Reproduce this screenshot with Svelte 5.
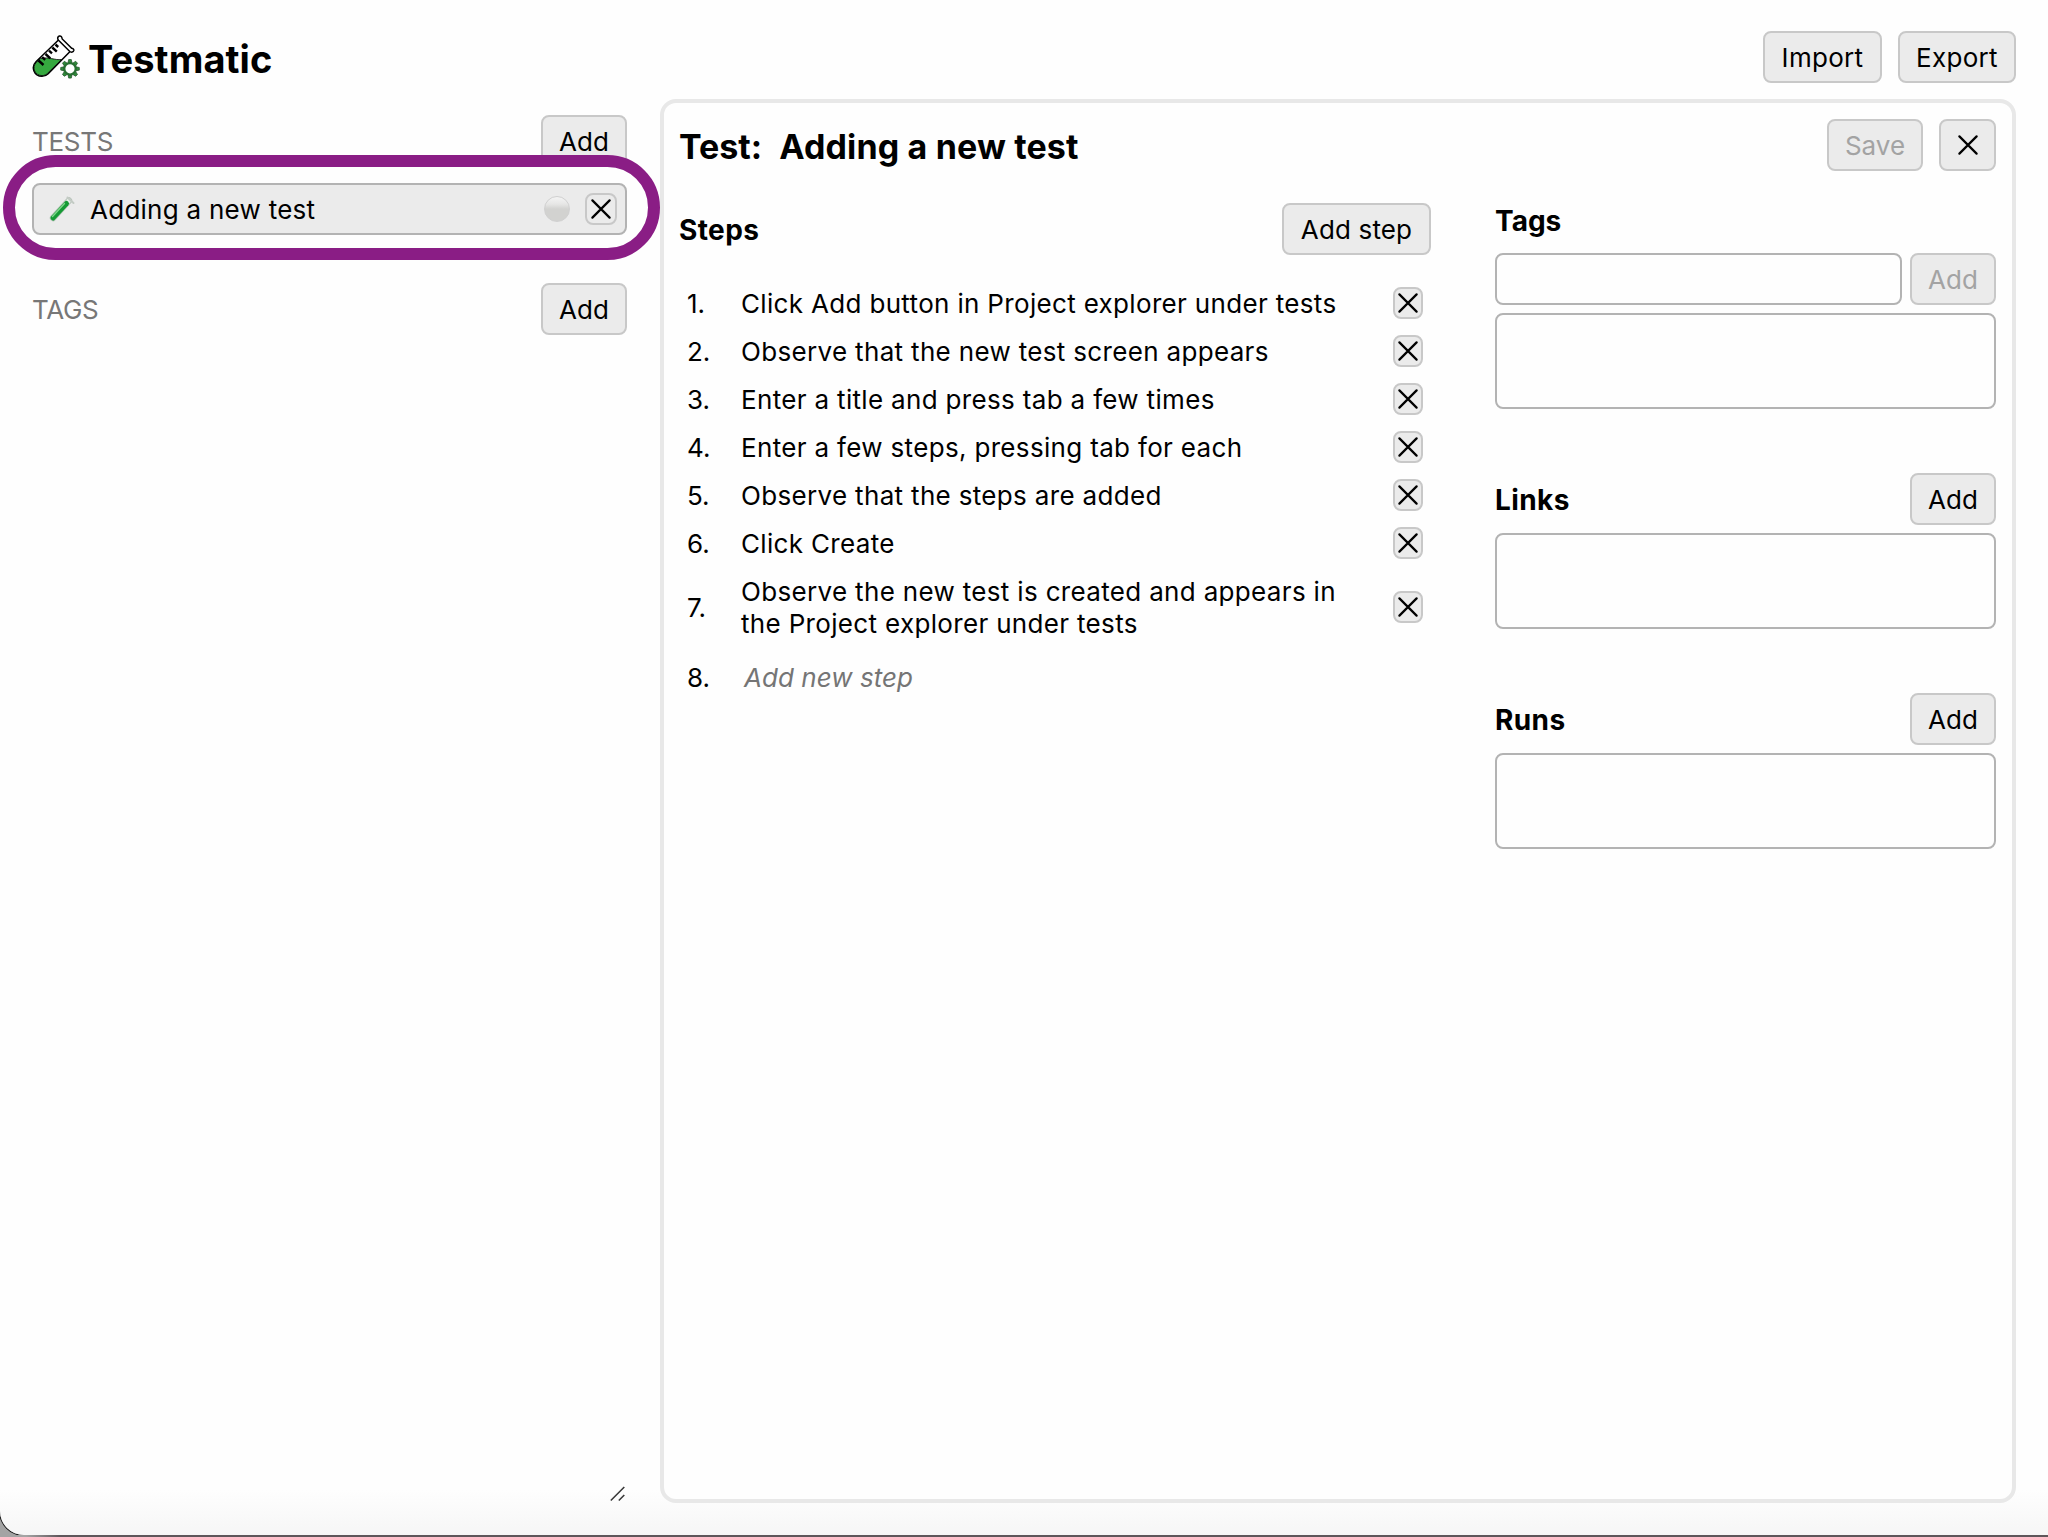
<script>
  const steps = [
    'Click Add button in Project explorer under tests',
    'Observe that the new test screen appears',
    'Enter a title and press tab a few times',
    'Enter a few steps, pressing tab for each',
    'Observe that the steps are added',
    'Click Create',
    'Observe the new test is created and appears in the Project explorer under tests',
  ];
  const sections = ['Links', 'Runs'];
  const teeth = [0, 45, 90, 135, 180, 225, 270, 315];
</script>

{#snippet cross()}
  <svg class="cross" width="20" height="20" viewBox="0 0 20 20" aria-hidden="true">
    <path d="M1.4 1.4 18.6 18.6M18.6 1.4 1.4 18.6" />
  </svg>
{/snippet}

<div class="window">
  <header>
    <div class="brand">
      <svg class="logo" width="48" height="44" viewBox="0 0 48 44" aria-hidden="true">
        <path class="tube" d="M27 4.500 4.200 26.500C-1.500 32 2 41.300 10 41.300c2.600 0 4.600-1 6.200-2.600L39 15.500Z" />
        <path class="liquid" d="M8.500 23.500 4.200 27.500C-.5 32.500 2.800 40.600 10 40.600c2.400 0 4.200-.9 5.700-2.400L29.500 24.500C23 25.500 17 21.500 8.500 23.500Z" />
        <path class="rim" d="M27.400 1c-1.900.6-2.200 2.700-.9 4.200l11.300 11.300c1.500 1.200 3.600.7 4-1.100.2-1.200-.7-1.900-2.100-2.100L30.200 4C29.900 1.900 28.900.6 27.400 1Z" />
        <path class="marks" d="m6.500 25.500 5 4.500M10.200 22.200l3 2.600M13.500 19l4.800 4.400M17 15.700l3 2.600M20.300 12.500l4.500 4.200M23.500 9.500l2.700 2.500" />
        <g transform="translate(38 33.800)">
          {#each teeth as angle}
            <path class="tooth" transform={`rotate(${angle})`} d="M-2-6-1.300-9.300H1.300L2-6Z" />
          {/each}
          <circle class="gear" r="5.700" />
        </g>
      </svg>
      <h1>Testmatic</h1>
    </div>
    <div class="actions">
      <button class="import">Import</button>
      <button class="export">Export</button>
    </div>
  </header>

  <main>
    <aside>
      <div class="group">
        <h2>TESTS</h2>
        <button class="add">Add</button>
      </div>
      <div class="item">
        <svg class="vial" width="28" height="28" viewBox="0 0 28 28" aria-hidden="true">
          <path d="M5 23 21 5.500" stroke="#b9c4bb" stroke-width="6.400" />
          <path d="M5 23 21 5.500" stroke="#e9efea" stroke-width="4.400" />
          <path d="M5 23 18.500 8.500" stroke="#169a35" stroke-width="5" />
          <path d="M4.500 21.500 16.500 8.500" stroke="#7fd68b" stroke-width="1.400" />
          <path d="m19.500 2.500 6 5.500" stroke="#c3cbc4" stroke-width="2" />
        </svg>
        <span class="name">Adding a new test</span>
        <span class="ball"></span>
        <button class="mini wide">{@render cross()}</button>
        <span class="ring"></span>
      </div>
      <div class="group tags">
        <h2>TAGS</h2>
        <button class="add">Add</button>
      </div>
      <svg class="grip" width="17" height="16" viewBox="0 0 17 16" aria-hidden="true">
        <path d="M.8 14.500 14.300 1M8.800 14.500 14.300 9" />
      </svg>
    </aside>

    <section class="panel">
      <div class="panel-head">
        <h2><span class="kind">Test:</span><span class="title">Adding a new test</span></h2>
        <div class="actions">
          <button class="save" disabled>Save</button>
          <button class="close">{@render cross()}</button>
        </div>
      </div>
      <div class="columns">
        <div class="steps">
          <div class="bar">
            <h3>Steps</h3>
            <button class="add-step">Add step</button>
          </div>
          <ol>
            {#each steps as step, i}
              <li>
                <span class="num">{i + 1}.</span>
                <span class="text">{step}</span>
                <button class="mini">{@render cross()}</button>
              </li>
            {/each}
            <li class="new">
              <span class="num">{steps.length + 1}.</span>
              <span class="text hint">Add new step</span>
            </li>
          </ol>
        </div>
        <div class="meta">
          <h3 class="tags-title">Tags</h3>
          <div class="tag-entry">
            <input type="text" aria-label="Tag" />
            <button class="add" disabled>Add</button>
          </div>
          <div class="box"></div>
          {#each sections as name}
            <div class="bar section">
              <h3>{name}</h3>
              <button class="add">Add</button>
            </div>
            <div class="box"></div>
          {/each}
        </div>
      </div>
    </section>
  </main>
</div>

<style>
  :global(body) {
    background: linear-gradient(90deg, #a4a4a4 0, #a4a4a4 26px, #5e565a 60px);
  }
  .window, .window * {
    box-sizing: border-box;
  }
  .window {
    display: flex;
    flex-direction: column;
    width: 2048px;
    height: 1535px;
    padding: 31px 32px 32px;
    border-radius: 0 0 0 24px;
    box-shadow: 0 0 0 1px #141414;
    background: linear-gradient(#fefefe 0, #fefefe 1490px, #f6f6f6 1534px);
    font-family: Inter, "Liberation Sans", sans-serif;
    font-size: 26px;
    line-height: 32px;
    color: #000;
  }
  h1, h2, h3, ol {
    margin: 0;
    padding: 0;
  }
  header, .brand, .actions, .group, .bar, .panel-head, .item, li, .tag-entry {
    display: flex;
    align-items: center;
  }
  header, .group, .bar, .panel-head {
    justify-content: space-between;
  }
  header {
    height: 52px;
  }
  .brand {
    gap: 8px;
  }
  .logo path, .logo circle {
    stroke: #000;
    stroke-width: 1.500;
    fill: none;
  }
  .logo .tube, .logo .rim {
    fill: #fefefe;
  }
  .logo .liquid {
    fill: #35a83f;
    stroke-width: 0.800;
  }
  .logo .marks {
    stroke-width: 2.400;
  }
  .logo .tooth {
    fill: #2f8a3a;
    stroke: #1e4a25;
    stroke-width: 0.700;
  }
  .logo .gear {
    stroke: #276f31;
    stroke-width: 2.200;
    fill: #fefefe;
  }
  h1 {
    font-size: 38px;
    font-weight: 700;
    letter-spacing: 0.1px;
    padding-top: 4px;
  }
  .actions {
    gap: 16px;
  }
  button {
    display: flex;
    align-items: center;
    justify-content: center;
    flex: none;
    height: 52px;
    padding: 2px 0 0;
    border: 2px solid #c8c8c8;
    border-radius: 8px;
    background: #ebebeb;
    font: inherit;
    color: #000;
  }
  button:disabled {
    color: #a3a3a3;
  }
  .import, .export { letter-spacing: 0.3px; }
  .import { width: 119px; }
  .export { width: 118px; }
  .add { width: 86px; }
  .save { width: 96px; }
  .close { width: 57px; padding: 0; }
  .add-step { width: 149px; letter-spacing: 0.15px; }
  .mini {
    width: 30px;
    height: 32px;
    padding: 0;
  }
  .mini.wide {
    width: 32px;
  }
  .cross {
    flex: none;
    fill: none;
    stroke: #000;
    stroke-width: 2.200;
    stroke-linecap: round;
  }
  main {
    display: flex;
    flex: 1;
    gap: 33px;
    padding-top: 16px;
  }
  aside {
    display: flex;
    flex-direction: column;
    width: 595px;
    padding-top: 16px;
  }
  .group h2 {
    padding-top: 2px;
    font-size: 26px;
    font-weight: 400;
    letter-spacing: -0.3px;
    color: #777;
  }
  .group.tags {
    margin-top: 48px;
  }
  .item {
    position: relative;
    height: 52px;
    margin-top: 16px;
    padding: 0 8px 0 15px;
    border: 2px solid #b3b3b3;
    border-radius: 8px;
    background: #ebebeb;
  }
  .vial {
    fill: none;
    stroke-linecap: round;
    margin-left: -1px;
  }
  .name {
    flex: 1;
    padding: 2px 0 0 14px;
    letter-spacing: 0.26px;
  }
  .ball {
    width: 26px;
    height: 26px;
    margin-right: 15px;
    border: 1px solid #d0d0d0;
    border-radius: 50%;
    background: linear-gradient(#f4f4f4 0%, #e6e6e5 30%, #d2d2d0 50%, #d2d2d0 100%);
  }
  .ring {
    position: absolute;
    left: -31px;
    top: -30px;
    width: 657px;
    height: 105px;
    border: 12.500px solid #8a1d85;
    border-radius: 53px;
  }
  .grip {
    align-self: flex-end;
    margin-top: auto;
    margin-bottom: 1px;
    fill: none;
    stroke: #3a3a3a;
    stroke-width: 1.600;
  }
  .panel {
    flex: 1;
    border: 4px solid #e8e8e8;
    border-radius: 16px;
    padding: 16px 16px 16px 15px;
    background: #fefefe;
  }
  .panel-head {
    height: 52px;
  }
  .panel-head h2 {
    display: flex;
    gap: 17px;
    font-size: 34px;
    font-weight: 700;
    padding-top: 3px;
  }
  .title {
    letter-spacing: 0.15px;
  }
  .columns {
    display: flex;
    justify-content: space-between;
    padding-top: 32px;
  }
  h3 {
    font-size: 28px;
    font-weight: 700;
  }
  .bar h3 {
    padding-top: 2px;
    letter-spacing: 0.4px;
  }
  .steps {
    width: 752px;
  }
  .bar {
    height: 52px;
  }
  ol {
    list-style: none;
    padding-top: 24px;
  }
  li {
    padding: 8px 8px;
  }
  .num, .text {
    position: relative;
    top: 1px;
  }
  .num {
    width: 54px;
  }
  .text {
    width: 610px;
    margin-right: auto;
    letter-spacing: 0.33px;
  }
  .new {
    height: 60px;
  }
  .hint {
    padding-left: 3px;
    font-style: italic;
    letter-spacing: 0.05px;
    color: #757575;
  }
  .meta {
    width: 501px;
  }
  .tags-title {
    padding: 2px 0 16px;
  }
  .tag-entry {
    gap: 8px;
    margin-bottom: 8px;
  }
  input {
    flex: 1;
    min-width: 0;
    height: 52px;
    border: 2px solid #b3b3b3;
    border-radius: 8px;
    background: #fefefe;
    font: inherit;
  }
  .box {
    height: 96px;
    border: 2px solid #b3b3b3;
    border-radius: 8px;
  }
  .section {
    margin: 64px 0 8px;
  }
</style>
